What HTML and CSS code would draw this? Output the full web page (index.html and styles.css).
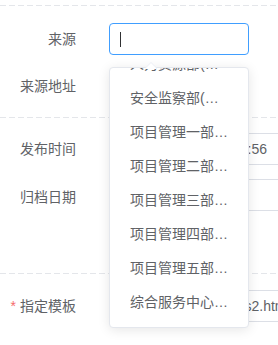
FILE: index.html
```html
<!DOCTYPE html>
<html lang="zh-CN">
<head>
<meta charset="utf-8">
<title>表单</title>
<link rel="stylesheet" href="styles.css">
</head>
<body>
<div class="page">
  <div class="divider first"></div>

  <div class="row r1">
    <label class="label">来源</label>
    <div class="field">
      <div class="input short focus"><span class="caret"></span></div>
      <div class="dropdown">
        <span class="arrow"></span>
        <div class="wrap">
          <ul class="list">
            <li class="item">人力资源部(人力资源部)</li>
            <li class="item">安全监察部(安全监察部)</li>
            <li class="item">项目管理一部(项目管理一部)</li>
            <li class="item">项目管理二部(项目管理二部)</li>
            <li class="item">项目管理三部(项目管理三部)</li>
            <li class="item">项目管理四部(项目管理四部)</li>
            <li class="item">项目管理五部(项目管理五部)</li>
            <li class="item">综合服务中心(综合服务中心)</li>
            <li class="item">综合办公室(综合办公室)</li>
          </ul>
        </div>
      </div>
    </div>
  </div>

  <div class="row r2">
    <label class="label">来源地址</label>
    <div class="field"><div class="input short"></div></div>
  </div>

  <div class="divider d2"></div>

  <div class="row r3">
    <label class="label">发布时间</label>
    <div class="field"><div class="input long date">2021-08-23 14:35:56</div></div>
  </div>

  <div class="row r4">
    <label class="label">归档日期</label>
    <div class="field"><div class="input long"></div></div>
  </div>

  <div class="divider d3"></div>

  <div class="row r5">
    <label class="label"><span class="req">*</span>指定模板</label>
    <div class="field"><div class="input long tpl">/html/template/news2.html</div></div>
  </div>
</div>
</body>
</html>
```

FILE: styles.css
```css
* { box-sizing: border-box; }
html, body {
  margin: 0;
  padding: 0;
  background: #ffffff;
}
body {
  font-family: "Liberation Sans", "Noto Sans CJK SC", sans-serif;
  font-size: 14px;
  color: #606266;
  overflow: hidden;
}
.page {
  width: 278px;
  height: 345px;
  overflow: hidden;
  position: relative;
}
.divider {
  height: 1px;
  width: 100%;
  background: repeating-linear-gradient(90deg, #e4e6ea 0 6px, transparent 6px 9px);
}
.divider.first { margin-top: 5px; }
.divider.d2 { margin-top: 15px; }
.divider.d3 { margin-top: 62px; }

.row {
  display: flex;
  align-items: center;
  height: 32px;
  gap: 33px;
}
.r1 { margin-top: 17px; }
.r2 { margin-top: 15px; }
.r3 { margin-top: 15px; }
.r4 { margin-top: 14px; }
.r5 { margin-top: 16px; }

.label {
  width: 76px;
  flex: none;
  text-align: right;
  white-space: nowrap;
  line-height: 32px;
}
.r4 .label { position: relative; top: 2px; }
.req {
  color: #f56c6c;
  margin-right: 4px;
}
.field {
  position: relative;
  flex: none;
  height: 32px;
}
.input {
  height: 32px;
  border: 1px solid #dcdfe6;
  border-radius: 4px;
  background: #fff;
  line-height: 30px;
  padding: 0 15px;
  white-space: nowrap;
  overflow: hidden;
  color: #606266;
}
.input.short { width: 140px; }
.input.long { width: 240px; }
.input.focus {
  border-color: #409eff;
  padding-left: 10px;
  display: flex;
  align-items: center;
}
.input.date { padding-left: 27px; }
.input.tpl { padding-left: 17px; }
.caret {
  display: block;
  width: 1px;
  height: 15px;
  background: #303133;
}

.dropdown {
  position: absolute;
  left: 0;
  top: 44px;
  width: 140px;
  height: 261px;
  border: 1px solid #e4e7ed;
  border-radius: 4px;
  background: #fff;
  box-shadow: 0 2px 12px 0 rgba(0, 0, 0, 0.1);
  z-index: 10;
}
.arrow {
  position: absolute;
  top: -6px;
  left: 35px;
  width: 0;
  height: 0;
  border-style: solid;
  border-width: 0 6px 6px 6px;
  border-color: transparent transparent #ebeef5 transparent;
}
.arrow::after {
  content: "";
  position: absolute;
  top: 1px;
  left: -6px;
  border-style: solid;
  border-width: 0 6px 6px 6px;
  border-color: transparent transparent #ffffff transparent;
}
.wrap {
  height: 100%;
  overflow: hidden;
  border-radius: 4px;
}
.list {
  list-style: none;
  margin: -21px 0 0 0;
  padding: 0;
}
.item {
  height: 34px;
  line-height: 34px;
  padding: 0 20px;
  white-space: nowrap;
  overflow: hidden;
  text-overflow: ellipsis;
  color: #606266;
  font-size: 14px;
}
```
